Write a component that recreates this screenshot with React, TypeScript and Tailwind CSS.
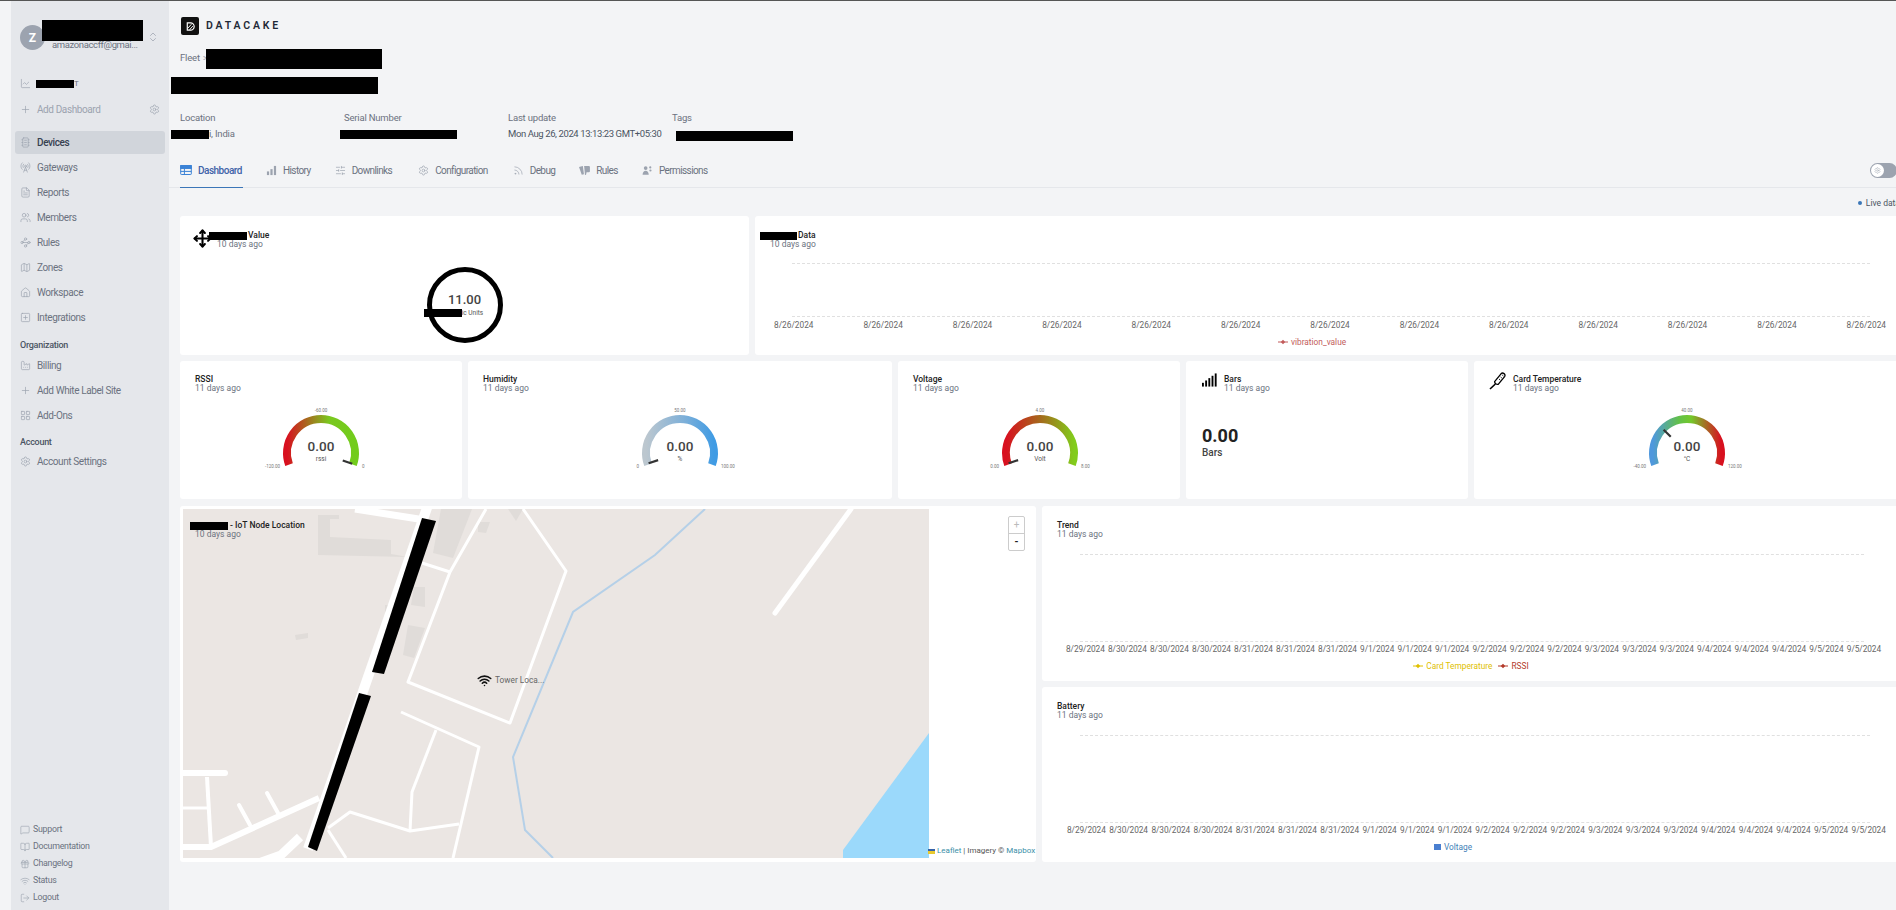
import {
  BookOpen, ChartLine, ChevronsUpDown, Factory, FileText, Gift, House, LayoutGrid, LogOut, Map as MapIcon,
  MessageSquare, Microchip, Move, Plus, RadioTower, Rss, Settings, SlidersHorizontal, SquarePlus,
  Users, Waypoints, Wifi,
} from 'lucide-react';

const navMain = [
  { label: 'Devices', icon: Microchip, active: true },
  { label: 'Gateways', icon: RadioTower },
  { label: 'Reports', icon: FileText },
  { label: 'Members', icon: Users },
  { label: 'Rules', icon: Waypoints },
  { label: 'Zones', icon: MapIcon },
  { label: 'Workspace', icon: House },
  { label: 'Integrations', icon: SquarePlus },
];

const navOrg = [
  { label: 'Billing', icon: Factory },
  { label: 'Add White Label Site', icon: Plus },
  { label: 'Add-Ons', icon: LayoutGrid },
];

const navFooter = [
  { label: 'Support', icon: MessageSquare },
  { label: 'Documentation', icon: BookOpen },
  { label: 'Changelog', icon: Gift },
  { label: 'Status', icon: Wifi },
  { label: 'Logout', icon: LogOut },
];

const trendDates = [
  '8/29/2024', '8/30/2024', '8/30/2024', '8/30/2024', '8/31/2024', '8/31/2024', '8/31/2024',
  '9/1/2024', '9/1/2024', '9/1/2024', '9/2/2024', '9/2/2024', '9/2/2024', '9/3/2024', '9/3/2024',
  '9/3/2024', '9/4/2024', '9/4/2024', '9/4/2024', '9/5/2024', '9/5/2024',
];

function Redact({ className }: { className: string }) {
  return <span className={`inline-block bg-black ${className}`} />;
}

function NavRow({ label, icon: Icon, active }: { label: string; icon: typeof Plus; active?: boolean }) {
  return (
    <div className={`flex h-[23px] items-center rounded-[3px] pl-[5px] ${active ? 'bg-[#d1d5db] text-[#374151]' : 'text-[#6b7280]'}`}>
      <Icon className="h-[11px] w-[11px] text-[#9ca3af]" strokeWidth={1.5} />
      <span className={`ml-[6px] text-[10px] tracking-[-0.04em] ${active ? 'font-medium' : ''}`}>{label}</span>
    </div>
  );
}

function Sidebar() {
  return (
    <aside className="flex h-full w-[158px] shrink-0 flex-col bg-[#e5e7eb]">
      <div className="relative h-[70px] shrink-0">
        <div className="absolute left-[9px] top-[24px] flex h-[25px] w-[25px] items-center justify-center rounded-full bg-[#9ca3af] text-[12px] font-bold text-white">Z</div>
        <Redact className="absolute left-[31px] top-[19px] h-[21px] w-[101px]" />
        <span className="absolute left-[41px] top-[39px] text-[9.5px] leading-[10px] tracking-[-0.04em] text-[#6b7280]">amazonaccff@gmai...</span>
        <ChevronsUpDown className="absolute left-[136px] top-[30px] h-[12px] w-[12px] text-[#9ca3af]" strokeWidth={1.5} />
      </div>
      <div className="flex flex-col px-[4px]">
        <div className="flex h-[25px] items-center pl-[5px] text-[#6b7280]">
          <ChartLine className="h-[11px] w-[11px] text-[#9ca3af]" strokeWidth={1.5} />
          <Redact className="ml-[5px] h-[8px] w-[38px]" />
          <span className="text-[8px]">T</span>
        </div>
        <div className="flex h-[26px] items-center justify-between pl-[5px] pr-[5px] text-[#9ca3af]">
          <div className="flex items-center">
            <Plus className="h-[11px] w-[11px]" strokeWidth={1.5} />
            <span className="ml-[6px] text-[10px] tracking-[-0.04em]">Add Dashboard</span>
          </div>
          <Settings className="h-[11px] w-[11px]" strokeWidth={1.5} />
        </div>
        <div className="mt-[9px] flex flex-col gap-[2px]">
          {navMain.map((item) => (
            <NavRow key={item.label} {...item} />
          ))}
        </div>
        <div className="mb-[3px] mt-[10px] pl-[5px] text-[9px] font-medium leading-[12px] tracking-[-0.03em] text-[#4b5563]">Organization</div>
        <div className="flex flex-col gap-[2px]">
          {navOrg.map((item) => (
            <NavRow key={item.label} {...item} />
          ))}
        </div>
        <div className="mb-[2px] mt-[9px] pl-[5px] text-[9px] font-medium leading-[12px] tracking-[-0.03em] text-[#4b5563]">Account</div>
        <NavRow label="Account Settings" icon={Settings} />
      </div>
      <div className="mt-auto flex flex-col gap-[3px] pb-[5px] pl-[9px]">
        {navFooter.map(({ label, icon: Icon }) => (
          <div key={label} className="flex h-[14px] items-center text-[#6b7280]">
            <Icon className="h-[10px] w-[10px] text-[#9ca3af]" strokeWidth={1.5} />
            <span className="ml-[3px] text-[8.8px] tracking-[-0.03em]">{label}</span>
          </div>
        ))}
      </div>
    </aside>
  );
}

function TableIcon({ className }: { className: string }) {
  return (
    <svg viewBox="0 0 12 12" className={className} fill="none" stroke="currentColor" strokeWidth="1">
      <rect x="0.7" y="1.5" width="10.6" height="9" rx="0.6" />
      <path d="M.7 4.3h10.6M.7 7.4h10.6M4.4 4.3v6.2" />
      <rect x="0.7" y="1.5" width="10.6" height="2.8" fill="currentColor" />
    </svg>
  );
}

function BarsIcon({ className }: { className: string }) {
  return (
    <svg viewBox="0 0 12 12" className={className} fill="currentColor">
      <rect x="1" y="7" width="2.4" height="4" />
      <rect x="4.8" y="4.5" width="2.4" height="6.5" />
      <rect x="8.6" y="1" width="2.4" height="10" />
    </svg>
  );
}

function RulesIcon({ className }: { className: string }) {
  return (
    <svg viewBox="0 0 12 12" className={className} fill="currentColor">
      <path d="M0 2.2 4.2 1 5.4 10 3 10.6ZM5.6 1.2h5.2a1.1 1.1 0 0 1 1.1 1.1v4.4a1.1 1.1 0 0 1-1.1 1.1H8.3L7.6 11 6.5 10.6Z" />
    </svg>
  );
}

function PeopleIcon({ className }: { className: string }) {
  return (
    <svg viewBox="0 0 12 12" className={className} fill="currentColor">
      <circle cx="4" cy="3.4" r="2" />
      <path d="M.6 10.6C.8 7.8 2.2 6.4 4 6.4s3.2 1.4 3.4 4.2Z" />
      <circle cx="9" cy="2.6" r="1.2" />
      <circle cx="9.2" cy="6" r="1.2" />
    </svg>
  );
}

function SlidersIcon({ className }: { className: string }) {
  return <SlidersHorizontal className={className} strokeWidth={1.5} />;
}

function GearIcon({ className }: { className: string }) {
  return <Settings className={className} strokeWidth={1.5} />;
}

function RssIcon({ className }: { className: string }) {
  return <Rss className={className} strokeWidth={1.5} />;
}

const tabs = [
  { label: 'History', icon: BarsIcon, ml: 'ml-[23px]' },
  { label: 'Downlinks', icon: SlidersIcon, ml: 'ml-[24px]' },
  { label: 'Configuration', icon: GearIcon, ml: 'ml-[26px]' },
  { label: 'Debug', icon: RssIcon, ml: 'ml-[25px]' },
  { label: 'Rules', icon: RulesIcon, ml: 'ml-[24px]' },
  { label: 'Permissions', icon: PeopleIcon, ml: 'ml-[24px]' },
];

function Header() {
  return (
    <header className="shrink-0">
      <div className="flex h-[34px] items-end pl-[12px]">
        <div className="flex h-[18px] w-[18px] items-center justify-center rounded-[2px] bg-[#111]">
          <svg viewBox="0 0 12 12" className="h-[11px] w-[11px]" fill="none" stroke="#fff" strokeWidth="1.3">
            <path d="M2.5 2h3.5a4 4 0 0 1 0 8H2.5Z" />
            <path d="M3 8 7 3.5M5 9.5 8.6 5.5" strokeWidth="1" />
          </svg>
        </div>
        <span className="mb-[3px] ml-[7px] text-[10.5px] font-semibold leading-[12px] tracking-[0.27em] text-[#1f2937]">DATACAKE</span>
      </div>
      <div className="mt-[13px] flex h-[21px] items-center pl-[11px] text-[9.5px] tracking-[-0.02em] text-[#6b7280]">
        <span>Fleet</span>
        <span className="ml-[3px] text-[#9ca3af]">&gt;</span>
        <Redact className="-ml-[2px] h-[20px] w-[176px]" />
      </div>
      <Redact className="ml-[2px] mt-[8px] block h-[17px] w-[207px]" />
      <div className="mt-[11px] grid grid-cols-[164px_164px_164px_164px] pl-[11px] text-[9.5px] tracking-[-0.02em] text-[#6b7280]">
        <div className="flex flex-col">
          <span className="h-[15px] leading-[12px]">Location</span>
          <span className="-ml-[9px] flex h-[15px] items-center">
            <Redact className="h-[9px] w-[38px]" />i, India
          </span>
        </div>
        <div className="flex flex-col">
          <span className="h-[15px] leading-[12px]">Serial Number</span>
          <span className="-ml-[4px] flex h-[15px] items-center">
            <Redact className="h-[9px] w-[117px]" />
          </span>
        </div>
        <div className="flex flex-col">
          <span className="h-[15px] leading-[12px]">Last update</span>
          <span className="flex h-[15px] items-center whitespace-nowrap tracking-[-0.042em] text-[#4b5563]">Mon Aug 26, 2024 13:13:23 GMT+05:30</span>
        </div>
        <div className="flex flex-col">
          <span className="h-[15px] leading-[12px]">Tags</span>
          <span className="ml-[4px] flex h-[15px] items-center">
            <Redact className="mt-[2px] h-[10px] w-[117px]" />
          </span>
        </div>
      </div>
      <div className="mt-[11px] flex h-[35px] items-center border-b border-[#e5e7eb] pl-[11px] pr-[3px]">
        <div className="-mb-px flex h-[35px] w-[63px] items-center border-b border-[#3b76b8] text-[#3f63a8]">
          <TableIcon className="h-[12px] w-[12px] text-[#3b82d6]" />
          <span className="ml-[6px] text-[10px] font-medium tracking-[-0.05em]">Dashboard</span>
        </div>
        {tabs.map(({ label, icon: Icon, ml }) => (
          <div key={label} className={`flex items-center text-[#6b7280] ${ml}`}>
            <Icon className="h-[11px] w-[11px] text-[#9ca3af]" />
            <span className="ml-[6px] text-[10px] tracking-[-0.06em]">{label}</span>
          </div>
        ))}
        <div className="ml-auto flex h-[15px] w-[27px] items-center rounded-full bg-[#9ca3af]">
          <div className="ml-[1px] flex h-[13px] w-[13px] items-center justify-center rounded-full bg-white text-[#9ca3af]">
            <Settings className="h-[7px] w-[7px]" strokeWidth={1.5} />
          </div>
        </div>
      </div>
      <div className="flex h-[28px] items-center justify-end pt-[2px] text-[8.5px] text-[#4b5563]">
        <span className="mr-[4px] h-[4px] w-[4px] rounded-full bg-[#3b76b8]" />
        <span>Live data</span>
      </div>
    </header>
  );
}

function WidgetTitle({ title, ago, className = '', agoClass = '' }: { title: React.ReactNode; ago: string; className?: string; agoClass?: string }) {
  return (
    <div className={`text-[8.5px] leading-[9px] ${className}`}>
      <div className="font-medium text-[#222]">{title}</div>
      <div className={`text-[#6b7280] ${agoClass}`}>{ago}</div>
    </div>
  );
}

function polar(cx: number, cy: number, r: number, deg: number) {
  const a = (deg * Math.PI) / 180;
  return { x: cx + r * Math.cos(a), y: cy - r * Math.sin(a) };
}

interface GaugeProps {
  id: string;
  stops: [string, string][];
  needle: number;
  unit: string;
  min: string;
  mid: string;
  max: string;
}

function Gauge({ id, stops, needle, unit, min, mid, max }: GaugeProps) {
  const cx = 60;
  const cy = 46;
  const start = polar(cx, cy, 34, 200);
  const end = polar(cx, cy, 34, -20);
  const n1 = polar(cx, cy, 23, needle);
  const n2 = polar(cx, cy, 33, needle);
  return (
    <div className="mt-[14px] flex justify-center">
      <svg width="120" height="70" viewBox="0 0 120 70">
        <defs>
          <linearGradient id={id} x1="0" x2="1" y1="0" y2="0">
            {stops.map(([offset, color]) => (
              <stop key={offset} offset={offset} stopColor={color} />
            ))}
          </linearGradient>
        </defs>
        <path d={`M${start.x} ${start.y}A34 34 0 1 1 ${end.x} ${end.y}`} fill="none" stroke={`url(#${id})`} strokeWidth="8" />
        <line x1={n1.x} y1={n1.y} x2={n2.x} y2={n2.y} stroke="#333" strokeWidth="2.2" />
        <text x={cx} y="44" textAnchor="middle" fontSize="13.5" fontWeight="500" fill="#444">0.00</text>
        <text x={cx} y="54" textAnchor="middle" fontSize="6.5" fill="#555">{unit}</text>
        <text x={cx} y="5" textAnchor="middle" fontSize="4.5" fill="#777">{mid}</text>
        <text x="19" y="61" textAnchor="end" fontSize="4.5" fill="#777">{min}</text>
        <text x="101" y="61" fontSize="4.5" fill="#777">{max}</text>
      </svg>
    </div>
  );
}

function LegendDiamond({ color }: { color: string }) {
  return (
    <svg width="10" height="6" viewBox="0 0 10 6" className="mr-[3px]">
      <line x1="0" y1="3" x2="10" y2="3" stroke={color} />
      <path d="M5 .8 7.2 3 5 5.2 2.8 3Z" fill={color} />
    </svg>
  );
}

function VibrationChart() {
  return (
    <div className="mt-[14px]">
      <div className="ml-[37px] mr-[30px] h-[54px] border-y border-dashed border-y-[#e0e0e0]" />
      <div className="ml-[19px] mr-[14px] mt-[2px] flex justify-between text-[8.3px] leading-[12px] text-[#666]">
        {Array.from({ length: 13 }, (_, i) => (
          <span key={i}>8/26/2024</span>
        ))}
      </div>
      <div className="ml-[523px] mt-[6px] flex items-center text-[8.3px] leading-[10px] text-[#c25b5b]">
        <LegendDiamond color="#c25b5b" />
        vibration_value
      </div>
    </div>
  );
}

function TrendChart({ gridRight, labelLeft, labelRight, legendRight, children }: { gridRight: string; labelLeft: string; labelRight: string; legendRight: string; children: React.ReactNode }) {
  return (
    <div className="mt-[15px]">
      <div className={`ml-[38px] h-[88px] border-y border-dashed border-y-[#e0e0e0] ${gridRight}`} />
      <div className={`mt-[1px] flex justify-between text-[8.3px] leading-[12px] tracking-[-0.01em] text-[#666] ${labelLeft} ${labelRight}`}>
        {trendDates.map((d, i) => (
          <span key={i}>{d}</span>
        ))}
      </div>
      <div className={`mt-[6px] flex items-center justify-center gap-[6px] text-[8.3px] leading-[10px] ${legendRight}`}>{children}</div>
    </div>
  );
}

function SignalBars({ className }: { className: string }) {
  return (
    <svg viewBox="0 0 16 14" className={className} fill="#000">
      <rect x="0" y="10" width="2" height="4" />
      <rect x="3.4" y="7.5" width="2" height="6.5" />
      <rect x="6.8" y="5" width="2" height="9" />
      <rect x="10.2" y="2.5" width="2" height="11.5" />
      <rect x="13.6" y="0" width="2" height="14" />
    </svg>
  );
}

function ThermoIcon({ className }: { className: string }) {
  return (
    <svg viewBox="0 0 18 18" className={className} fill="none" stroke="#000" strokeWidth="1.3" strokeLinejoin="round">
      <path d="M5.6 9.6 12 1.8a2.3 2.3 0 0 1 3.6 2.8L9.2 12.4a3 3 0 0 1-3.6-2.8Z" />
      <path d="M6.4 12 1 17" strokeWidth="1.6" />
      <path d="M10 7l1.2 1M11.6 5l1.2 1M13.2 3l1.2 1" strokeWidth="0.9" />
    </svg>
  );
}

const roads: { d: string; w: number; cap?: 'round' }[] = [
  { d: 'M245 -4 125 340', w: 10 },
  { d: 'M117 328 98 346 70 356', w: 9 },
  { d: 'M172 0 242 11', w: 7 },
  { d: 'M303 0 267 63 225 173 327 214 383 62 340 0', w: 3 },
  { d: 'M267 63 239 54', w: 3 },
  { d: 'M668 0 592 104', w: 5, cap: 'round' },
  { d: 'M218 203 296 238 270 349', w: 3 },
  { d: 'M253 221 229 283 227 322 276 315', w: 3 },
  { d: 'M145 319 167 303 227 322', w: 3 },
  { d: 'M145 321 163 349', w: 3 },
  { d: 'M0 264 42 264', w: 6, cap: 'round' },
  { d: 'M24 268 28 338', w: 4 },
  { d: 'M0 299 24 299', w: 3 },
  { d: 'M0 338 28 338 136 289', w: 6 },
  { d: 'M56 296 67 316', w: 4, cap: 'round' },
  { d: 'M84 284 95 304', w: 4, cap: 'round' },
];

const buildings = [
  '135,6 156,6 156,10 147,10 147,28 208,31 208,45 225,48 135,46',
  '258,0 289,0 270,49 250,44',
  '325,0 340,0 333,12',
  '295,13 307,13 303,24 295,23',
  '225,116 242,119 231,149 220,146',
  '231,78 242,78 242,98 228,96',
  '202,96 209,96 209,108 202,108',
  '112,126 125,124 125,129 113,131',
];

function MapCard() {
  return (
    <div className="relative h-full w-[856px] shrink-0 rounded-[3px] bg-white p-[3px]">
      <svg width="746" height="349" viewBox="0 0 746 349" className="block bg-[#ebe6e3]">
        {buildings.map((points) => (
          <polygon key={points} points={points} fill="#e0dcd9" />
        ))}
        <path d="M522 0 472 46 390 103 330 248 342 321 370 349" fill="none" stroke="#b5d0e8" strokeWidth="2" />
        <polygon points="746,224 660,341 660,349 746,349" fill="#9bd9fb" />
        {roads.map((road) => (
          <path key={road.d} d={road.d} fill="none" stroke="#fff" strokeWidth={road.w} strokeLinecap={road.cap ?? 'butt'} strokeLinejoin="round" />
        ))}
        <polygon points="239,9 253,12 201,165 189,163" fill="#000" />
        <polygon points="176,184 188,187 134,342 125,338" fill="#000" />
      </svg>
      <WidgetTitle
        className="absolute left-[10px] top-[15px]"
        agoClass="pl-[5px]"
        title={<span className="flex items-center"><Redact className="h-[8px] w-[38px]" />&nbsp;- IoT Node Location</span>}
        ago="10 days ago"
      />
      <div className="absolute left-[297px] top-[167px] flex items-center">
        <Wifi className="h-[15px] w-[15px] text-[#111]" strokeWidth={2.5} />
        <span className="ml-[3px] text-[8.3px] text-[#666]">Tower Loca...</span>
      </div>
      <div className="absolute left-[828px] top-[10px] flex w-[17px] flex-col rounded-[2px] border border-[#ccc] bg-white text-center text-[10px] leading-[16px]">
        <span className="border-b border-[#ccc] text-[#bbb]">+</span>
        <span className="font-bold text-[#222]">-</span>
      </div>
      <div className="absolute left-[748px] top-[340px] flex items-center whitespace-nowrap text-[8px] leading-[10px] text-[#555]">
        <span className="mr-[2px] inline-flex h-[5px] w-[7px] flex-col">
          <span className="h-1/2 bg-[#3563a8]" />
          <span className="h-1/2 bg-[#e8c92e]" />
        </span>
        <span className="text-[#3a8fa8]">Leaflet</span>&nbsp;| Imagery ©&nbsp;<span className="text-[#3a8fa8]">Mapbox</span>
      </div>
    </div>
  );
}

export default function App() {
  return (
    <div className="flex h-[910px] w-[1896px] overflow-hidden border-t border-[#555] bg-[#f3f4f6] font-['Roboto',sans-serif]">
      <div className="w-[11px] shrink-0" />
      <Sidebar />
      <main className="flex w-[1731px] shrink-0 flex-col">
        <Header />
        <div className="flex flex-col pl-[11px]">
          <div className="flex h-[139px] gap-[6px]">
            <div className="relative w-[569px] rounded-[3px] bg-white">
              <Move className="absolute left-[13px] top-[13px] h-[19px] w-[19px] text-black" strokeWidth={2.6} />
              <div className="absolute left-[29px] top-[15px] flex items-center text-[8.5px] font-medium leading-[9px] text-[#222]">
                <Redact className="h-[8px] w-[38px]" />
                <span className="ml-[1px]">Value</span>
              </div>
              <span className="absolute left-[37px] top-[24px] text-[8.5px] leading-[9px] text-[#6b7280]">10 days ago</span>
              <div className="flex h-full items-end justify-center pb-[12px]">
                <div className="relative flex h-[76px] w-[76px] flex-col items-center justify-center rounded-full border-[5px] border-black">
                  <span className="text-[13px] font-medium leading-[14px] text-[#444]">11.00</span>
                  <span className="mt-[2px] flex items-center text-[6.5px] leading-[8px] text-[#555]">
                    <Redact className="-ml-[22px] h-[8px] w-[38px]" />
                    ic Units
                  </span>
                </div>
              </div>
            </div>
            <div className="w-[1145px] rounded-[3px] bg-white pl-[5px] pt-[15px]">
              <WidgetTitle
                agoClass="pl-[10px]"
                title={<span className="flex items-center"><Redact className="h-[8px] w-[37px]" /><span className="ml-[1px]">Data</span></span>}
                ago="10 days ago"
              />
              <div className="-ml-[5px]">
                <VibrationChart />
              </div>
            </div>
          </div>
          <div className="mt-[6px] flex h-[138px] gap-[6px]">
            <div className="w-[282px] rounded-[3px] bg-white pl-[15px] pt-[14px]">
              <WidgetTitle title="RSSI" ago="11 days ago" />
              <div className="-ml-[15px]">
                <Gauge id="rssi" needle={-19} unit="rssi" min="-120.00" mid="-60.00" max="0"
                  stops={[['0', '#d8101f'], ['0.35', '#a07a1e'], ['0.62', '#7ac81f'], ['1', '#72cc1c']]} />
              </div>
            </div>
            <div className="w-[424px] rounded-[3px] bg-white pl-[15px] pt-[14px]">
              <WidgetTitle title="Humidity" ago="11 days ago" />
              <div className="-ml-[15px]">
                <Gauge id="humidity" needle={198} unit="%" min="0" mid="50.00" max="100.00"
                  stops={[['0', '#bcc7cf'], ['0.55', '#7fb0d8'], ['1', '#3f9be4']]} />
              </div>
            </div>
            <div className="w-[282px] rounded-[3px] bg-white pl-[15px] pt-[14px]">
              <WidgetTitle title="Voltage" ago="11 days ago" />
              <div className="-ml-[13px]">
                <Gauge id="voltage" needle={198} unit="Volt" min="0.00" mid="4.00" max="8.00"
                  stops={[['0', '#d8101f'], ['0.5', '#a5691c'], ['1', '#82cc1c']]} />
              </div>
            </div>
            <div className="w-[282px] rounded-[3px] bg-white pl-[16px] pt-[14px]">
              <div className="flex items-start">
                <SignalBars className="-mt-[2px] mr-[7px] h-[14px] w-[15px]" />
                <WidgetTitle title="Bars" ago="11 days ago" />
              </div>
              <div className="mt-[32px] text-[18px] font-bold leading-[22px] text-[#222]">0.00</div>
              <div className="text-[10px] font-medium leading-[12px] text-[#444]">Bars</div>
            </div>
            <div className="w-[426px] rounded-[3px] bg-white pl-[15px] pt-[14px]">
              <div className="flex items-start">
                <ThermoIcon className="-mt-[3px] mr-[6px] h-[18px] w-[18px]" />
                <WidgetTitle title="Card Temperature" ago="11 days ago" />
              </div>
              <div className="-ml-[15px]">
                <Gauge id="temp" needle={135} unit="°C" min="-40.00" mid="40.00" max="120.00"
                  stops={[['0', '#4f98dd'], ['0.38', '#62c04a'], ['0.56', '#74c82a'], ['1', '#d8101f']]} />
              </div>
            </div>
          </div>
          <div className="mt-[7px] flex h-[356px] gap-[6px]">
            <MapCard />
            <div className="flex w-[858px] flex-col gap-[6px]">
              <div className="h-[175px] rounded-[3px] bg-white pt-[15px]">
                <WidgetTitle className="pl-[15px]" title="Trend" ago="11 days ago" />
                <TrendChart gridRight="mr-[36px]" labelLeft="ml-[24px]" labelRight="mr-[19px]" legendRight="">
                  <span className="flex items-center text-[#e0c000]"><LegendDiamond color="#e0c000" />Card Temperature</span>
                  <span className="flex items-center text-[#b33a2a]"><LegendDiamond color="#b33a2a" />RSSI</span>
                </TrendChart>
              </div>
              <div className="h-[175px] rounded-[3px] bg-white pt-[15px]">
                <WidgetTitle className="pl-[15px]" title="Battery" ago="11 days ago" />
                <TrendChart gridRight="mr-[30px]" labelLeft="ml-[25px]" labelRight="mr-[14px]" legendRight="mr-[36px]">
                  <span className="flex items-center text-[#3f7fb8]">
                    <span className="mr-[3px] h-[6px] w-[7px] bg-[#4a7fd0]" />
                    Voltage
                  </span>
                </TrendChart>
              </div>
            </div>
          </div>
        </div>
      </main>
    </div>
  );
}
